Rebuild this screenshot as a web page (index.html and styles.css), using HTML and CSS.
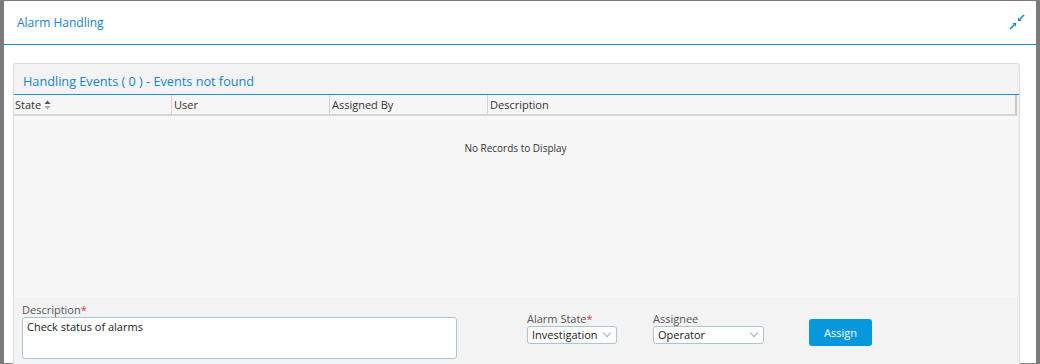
FILE: index.html
```html
<!DOCTYPE html>
<html lang="en">
<head>
  <meta charset="UTF-8" />
  <title>Alarm Handling</title>
  <link rel="stylesheet" href="styles.css">
</head>
<body>
  <div class="dialog">
    <div class="dialog-header">
      <span class="dialog-title">Alarm Handling</span>
      <svg class="collapse-icon" width="16" height="16" viewBox="0 0 16 16">
        <path d="M15 1 L10.5 5.5" stroke="#1a8ad0" stroke-width="1.6" />
        <path d="M9 3.5 L9 7 L12.5 7 Z" fill="#1a8ad0" />
        <path d="M1 15 L5.5 10.5" stroke="#1a8ad0" stroke-width="1.6" />
        <path d="M7 9 L7 12.5 L3.5 9 Z" fill="#1a8ad0" />
      </svg>
    </div>

    <div class="dialog-body">
      <div class="panel">
        <div class="panel-title">Handling Events ( 0 ) - Events not found</div>

        <div class="grid">
          <div class="grid-head">
            <div class="col">State
              <svg class="sort-icon" width="7" height="10" viewBox="0 0 7 10">
                <path d="M0.5 4 L3.5 0.5 L6.5 4 Z" fill="#555" />
                <path d="M0.5 6 L3.5 9.5 L6.5 6 Z" fill="#aaa" />
              </svg>
            </div>
            <div class="col">User</div>
            <div class="col">Assigned By</div>
            <div class="col col-wide">Description</div>
          </div>
          <div class="grid-body">
            <p class="no-records">No Records to Display</p>
          </div>
        </div>

        <div class="assign-form">
          <div class="field field-desc">
            <label>Description<span class="req">*</span></label>
            <div class="textarea">Check status of alarms</div>
          </div>
          <div class="field field-state">
            <label>Alarm State<span class="req">*</span></label>
            <div class="select">Investigation <span class="chev"></span></div>
          </div>
          <div class="field field-assignee">
            <label>Assignee</label>
            <div class="select">Operator <span class="chev"></span></div>
          </div>
          <button class="assign-btn">Assign</button>
        </div>
      </div>
    </div>
  </div>
</body>
</html>
```

FILE: styles.css
```css
body {
  margin: 0;
  background: #7b7b7b;
  font-family: 'Open Sans', 'Liberation Sans', sans-serif;
  color: #333;
  height: 364px;
  overflow: hidden;
}

.dialog {
  margin: 1px 0 0 4px;
  width: 1032px;
  height: 362px;
  background: #fff;
  border-bottom: 1px solid #8c8c8c;
}

.dialog-header {
  height: 43px;
  border-bottom: 1px solid #1690d6;
  display: flex;
  align-items: center;
  justify-content: space-between;
  padding: 0 11px 0 13px;
}

.dialog-title {
  font-size: 12px;
  color: #1a82c8;
}

.collapse-icon {
  margin-top: -1px;
}

.dialog-body {
  padding: 18px 16px 0 9px;
}

.panel {
  border: 1px solid #dcdcdc;
  border-bottom: none;
  border-radius: 3px 3px 0 0;
  background: #f3f3f3;
  height: 300px;
  display: flex;
  flex-direction: column;
}

.panel-title {
  height: 30px;
  line-height: 34px;
  padding-left: 9px;
  font-size: 12.7px;
  color: #1684c9;
  border-bottom: 1px solid #1690d6;
}

.grid {
  flex: 1;
  display: flex;
  flex-direction: column;
  background: #f7f7f7;
  margin-right: 2px;
}

.grid-head {
  display: flex;
  height: 19px;
  background: #f6f6f6;
  border-bottom: 2px solid #d6d6d6;
  border-right: 2px solid #c8c8c8;
}

.col {
  width: 156px;
  border-right: 1px solid #d2d2d2;
  font-size: 11px;
  line-height: 19px;
  padding-left: 1px;
  color: #333;
  display: flex;
  align-items: center;
  gap: 3px;
}

.col + .col {
  padding-left: 2px;
  width: 155px;
}

.col-wide {
  flex: 1;
  border-right: none;
}

.grid-body {
  flex: 1;
  text-align: center;
}

.no-records {
  margin: 25px 0 0;
  font-size: 10px;
  color: #333;
}

.assign-form {
  height: 67px;
  background: #f3f3f3;
  display: flex;
  align-items: flex-start;
  padding-left: 8px;
}

.field label {
  display: block;
  font-size: 11px;
  color: #555;
  line-height: 14px;
}

.req {
  color: #d33;
}

.field-desc {
  padding-top: 6px;
}

.textarea {
  width: 425px;
  height: 38px;
  background: #fff;
  border: 1px solid #a9c4d8;
  border-radius: 3px;
  font-size: 11px;
  padding: 1px 4px;
  color: #222;
}

.field-state {
  margin-left: 70px;
  padding-top: 15px;
}

.field-assignee {
  margin-left: 36px;
  padding-top: 15px;
}

.select {
  height: 16px;
  background: #fff;
  border: 1px solid #a9c4d8;
  border-radius: 3px;
  font-size: 11px;
  line-height: 16px;
  padding: 0 4px;
  color: #222;
  display: flex;
  justify-content: space-between;
  align-items: center;
  gap: 4px;
}

.field-state .select {
  width: 80px;
}

.field-assignee .select {
  width: 101px;
}

.chev {
  width: 5px;
  height: 5px;
  border-right: 1px solid #aaa;
  border-bottom: 1px solid #aaa;
  transform: rotate(45deg);
  margin: -4px 2px 0 0;
}

.assign-btn {
  margin: 22px 0 0 45px;
  width: 63px;
  height: 27px;
  background: #0797dc;
  color: #fff;
  border: none;
  border-radius: 3px;
  font-family: inherit;
  font-size: 11px;
  padding: 0;
}
```
